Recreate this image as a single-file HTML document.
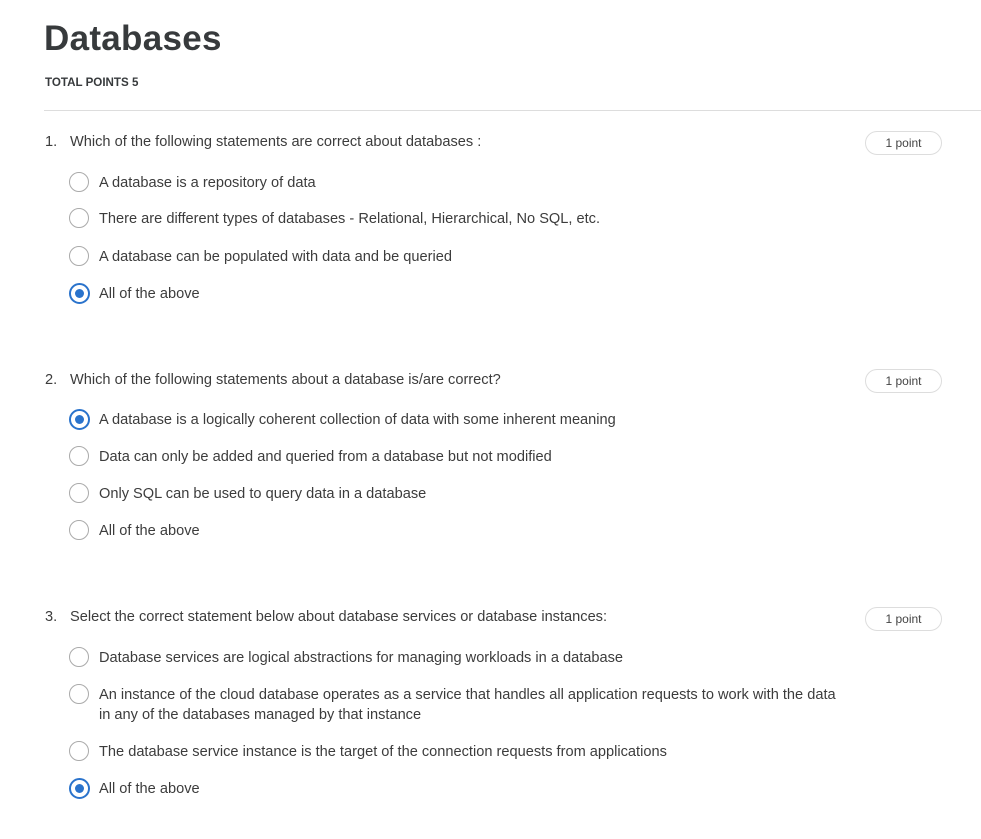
<!DOCTYPE html>
<html><head><meta charset="utf-8"><style>
body{margin:0;background:#fff;width:981px;height:839px;overflow:hidden;font-family:"Liberation Sans",sans-serif;color:#3c3c3c;position:relative}
.a{position:absolute;line-height:20px;font-size:14.6px;white-space:nowrap;margin-top:1px}
h1{position:absolute;left:44px;top:19px;margin:0;font-size:35px;font-weight:bold;color:#373a3c;letter-spacing:0.3px}
.tp{position:absolute;left:45px;top:76px;font-size:11.6px;font-weight:bold;color:#373a3c}
.hr{position:absolute;left:44px;right:0;top:110px;border-top:1px solid #ddd}
.r{position:absolute;left:69px;width:18px;height:18px;border:1.5px solid #aaa;border-radius:50%;box-sizing:content-box}
.r.s{border:2px solid #2a73cc;width:17px;height:17px}
.r.s::after{content:"";position:absolute;left:4px;top:4px;width:9px;height:9px;border-radius:50%;background:#2a73cc}
.p{position:absolute;left:865px;width:75px;height:22px;border:1px solid #ddd;border-radius:12px;font-size:12px;line-height:23px;text-align:center;color:#444}
</style></head><body>
<h1>Databases</h1>
<div class="tp">TOTAL POINTS 5</div>
<div class="hr"></div>

<div class="a" style="left:45px;top:131px">1.</div>
<div class="a" style="left:70px;top:131px">Which of the following statements are correct about databases :</div>
<div class="p" style="top:131px">1 point</div>
<div class="r" style="top:172px"></div><div class="a" style="left:99px;top:172px">A database is a repository of data</div>
<div class="r" style="top:208px"></div><div class="a" style="left:99px;top:208px">There are different types of databases - Relational, Hierarchical, No SQL, etc.</div>
<div class="r" style="top:246px"></div><div class="a" style="left:99px;top:246px">A database can be populated with data and be queried</div>
<div class="r s" style="top:283px"></div><div class="a" style="left:99px;top:283px">All of the above</div>

<div class="a" style="left:45px;top:369px">2.</div>
<div class="a" style="left:70px;top:369px">Which of the following statements about a database is/are correct?</div>
<div class="p" style="top:369px">1 point</div>
<div class="r s" style="top:409px"></div><div class="a" style="left:99px;top:409px">A database is a logically coherent collection of data with some inherent meaning</div>
<div class="r" style="top:446px"></div><div class="a" style="left:99px;top:446px">Data can only be added and queried from a database but not modified</div>
<div class="r" style="top:483px"></div><div class="a" style="left:99px;top:483px">Only SQL can be used to query data in a database</div>
<div class="r" style="top:520px"></div><div class="a" style="left:99px;top:520px">All of the above</div>

<div class="a" style="left:45px;top:606px">3.</div>
<div class="a" style="left:70px;top:606px">Select the correct statement below about database services or database instances:</div>
<div class="p" style="top:607px">1 point</div>
<div class="r" style="top:647px"></div><div class="a" style="left:99px;top:647px">Database services are logical abstractions for managing workloads in a database</div>
<div class="r" style="top:684px"></div><div class="a" style="left:99px;top:684px">An instance of the cloud database operates as a service that handles all application requests to work with the data</div>
<div class="a" style="left:99px;top:704px">in any of the databases managed by that instance</div>
<div class="r" style="top:741px"></div><div class="a" style="left:99px;top:741px">The database service instance is the target of the connection requests from applications</div>
<div class="r s" style="top:778px"></div><div class="a" style="left:99px;top:778px">All of the above</div>
</body></html>
